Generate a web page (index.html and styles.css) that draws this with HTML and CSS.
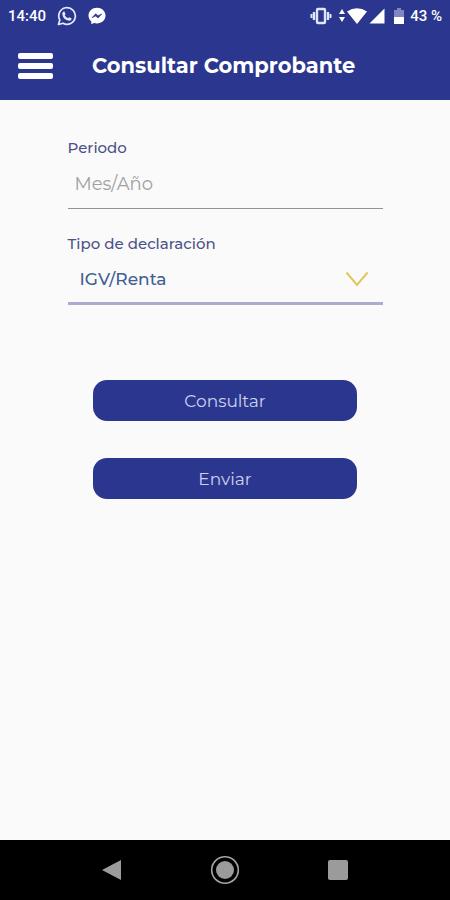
FILE: index.html
```html
<!DOCTYPE html>
<html lang="es">
<head>
<meta charset="utf-8">
<meta name="viewport" content="width=device-width, initial-scale=1">
<title>Consultar Comprobante</title>
<link rel="stylesheet" href="styles.css">
</head>
<body>
<div class="statusbar">
  <div class="status-left">
    <span class="clock">14:40</span>
    <svg width="20" height="20" viewBox="0 0 20 20" fill="none" aria-hidden="true">
      <path d="M1.5 18.5 2.8 14A8.3 8.3 0 1 1 6 17.2Z" stroke="#e6ebfb" stroke-width="1.7" stroke-linejoin="round"/>
      <path d="M7.2 5.3 8.5 7.9 7.7 9.2Q8.8 11.4 11 12.3L12.1 11.3 14.7 12.6Q14.4 14.8 12.2 14.8 6.2 13.9 5.2 8 5.2 5.8 7.2 5.3Z" fill="#e6ebfb"/>
    </svg>
    <svg width="18" height="18" viewBox="0 0 18 18" aria-hidden="true">
      <path d="M9 .7C4.2.7.5 4 .5 8.6c0 2.5 1.1 4.5 2.8 5.9v2.8l2.7-1.2c1 .3 2 .4 3 .4 4.800 0 8.500-3.300 8.500-7.900S13.800.7 9 .7Z" fill="#fff"/>
      <path d="m4 10.700 3.700-4 2.300 2 3.800-1.800-3.700 4.100-2.400-2Z" fill="#2b378f" stroke="#2b378f" stroke-width=".6"/>
    </svg>
  </div>
  <div class="status-right">
    <svg width="22" height="18" viewBox="0 0 22 18" fill="none" stroke="#dfe5fa" aria-hidden="true">
      <rect x="7" y="2" width="8" height="14" rx="1" stroke-width="2.400"/>
      <path d="M4 5v8M18 5v8" stroke-width="2.400"/>
      <path d="M1.500 7v4M20.500 7v4" stroke-width="2"/>
    </svg>
    <svg class="data" width="6" height="14" viewBox="0 0 6 14" fill="#fff" aria-hidden="true">
      <path d="M3 0 6 5H0ZM0 8h6l-3 5Z"/>
    </svg>
    <svg width="20" height="16" viewBox="0 0 20 16" fill="#fff" aria-hidden="true">
      <path d="M0 3.500Q10-3 20 3.500L10 16Z"/>
    </svg>
    <svg class="signal" width="16" height="16" viewBox="0 0 16 16" fill="#fff" aria-hidden="true">
      <path d="M15.500.5V15.500H.5Z"/>
    </svg>
    <svg class="battery" width="10" height="16" viewBox="0 0 10 16" aria-hidden="true">
      <path d="M0 2h3V0h4v2h3v7H0Z" fill="#7f86c2"/>
      <path d="M0 9h10v7H0Z" fill="#fff"/>
    </svg>
    <span class="charge">43 %</span>
  </div>
</div>
<header class="appbar">
  <button class="menu" type="button" aria-label="Menú">
    <svg width="36" height="28" viewBox="0 0 36 28" fill="#fff" aria-hidden="true">
      <rect y="1" width="35" height="6" rx="2"/>
      <rect y="11" width="35" height="6" rx="2"/>
      <rect y="21" width="35" height="6" rx="2"/>
    </svg>
  </button>
  <h1>Consultar Comprobante</h1>
</header>
<main>
  <form class="form">
    <div class="field">
      <label for="periodo">Periodo</label>
      <input class="control" id="periodo" type="text" placeholder="Mes/Año">
    </div>
    <div class="field">
      <label for="tipo">Tipo de declaración</label>
      <div class="picker">
        <select class="control" id="tipo"><option>IGV/Renta</option></select>
        <svg class="chevron" width="24" height="16" viewBox="0 0 24 16" fill="none" aria-hidden="true">
          <path d="M1.500 1.500 12 14 22.500 1.500" stroke="#e3c65c" stroke-width="2"/>
        </svg>
      </div>
    </div>
    <div class="actions">
      <button class="action" type="button">Consultar</button>
      <button class="action" type="button">Enviar</button>
    </div>
  </form>
</main>
<nav class="navbar" aria-label="Sistema">
  <button type="button" aria-label="Atrás">
    <svg width="30" height="30" viewBox="0 0 30 30" fill="#9b9b9b"><path d="M5 15 24 5v20Z"/></svg>
  </button>
  <button type="button" aria-label="Inicio">
    <svg width="30" height="30" viewBox="0 0 30 30"><circle cx="15" cy="15" r="13.300" fill="none" stroke="#a5a5a5" stroke-width="1.600"/><circle cx="15" cy="15" r="9" fill="#9b9b9b"/></svg>
  </button>
  <button type="button" aria-label="Recientes">
    <svg width="30" height="30" viewBox="0 0 30 30" fill="#9b9b9b"><rect x="5" y="5" width="20" height="20" rx="2"/></svg>
  </button>
</nav>
</body>
</html>
```
FILE: styles.css
```css
* {
  box-sizing: border-box;
}

body {
  margin: 0;
  min-height: 100vh;
  display: flex;
  flex-direction: column;
  background: #fafafa;
  font-family: Montserrat, Inter, "Open Sans", sans-serif;
}

button,
input,
select {
  font-family: inherit;
  margin: 0;
  border: 0;
}

svg {
  display: block;
}

.statusbar {
  display: flex;
  justify-content: space-between;
  align-items: center;
  height: 32px;
  padding: 0 8px;
  background: #2b378f;
  color: #fff;
  font: 500 15px/20px Roboto, sans-serif;
}

.status-left,
.status-right {
  display: flex;
  align-items: center;
}

.status-left {
  gap: 11px;
}

.data {
  margin: 0 2px 0 7px;
}

.signal {
  margin-left: 2px;
}

.battery {
  margin: 0 6px 0 9px;
}

.appbar {
  display: flex;
  align-items: center;
  gap: 38px;
  height: 68px;
  padding: 0 16px;
  background: #2b378f;
  color: #fff;
}

.menu {
  padding: 0 0 0 2px;
  background: none;
}

.appbar h1 {
  margin: 0;
  font-size: 21px;
  line-height: 28px;
  font-weight: 700;
}

main {
  flex: 1;
  padding: 36px 15% 0;
}

.field {
  margin-bottom: 23px;
}

.field label {
  display: block;
  color: #4d5286;
  font-size: 15px;
  line-height: 24px;
  font-weight: 500;
}

.control {
  display: block;
  width: 100%;
  height: 49px;
  padding: 0 7px;
  border-bottom: 1px solid #929292;
  border-radius: 0;
  background: none;
  font-size: 18px;
}

.control::placeholder {
  color: #a0a0a0;
}

.picker {
  position: relative;
}

.picker .control {
  appearance: none;
  padding-left: 12px;
  border-bottom: 3px solid #a9acd0;
  color: #3f6090;
  font-size: 17px;
  font-weight: 500;
}

.chevron {
  position: absolute;
  right: 14px;
  top: 15px;
  pointer-events: none;
}

.actions {
  display: grid;
  gap: 37px;
  margin-top: 75px;
  padding: 0 8%;
}

.action {
  height: 41px;
  border-radius: 14px;
  background: #2b378f;
  color: #ccd2ee;
  font-size: 17px;
}

.navbar {
  display: flex;
  justify-content: space-around;
  align-items: center;
  height: 60px;
  padding: 0 56px;
  background: #000;
}

.navbar button {
  padding: 0;
  background: none;
}
```
